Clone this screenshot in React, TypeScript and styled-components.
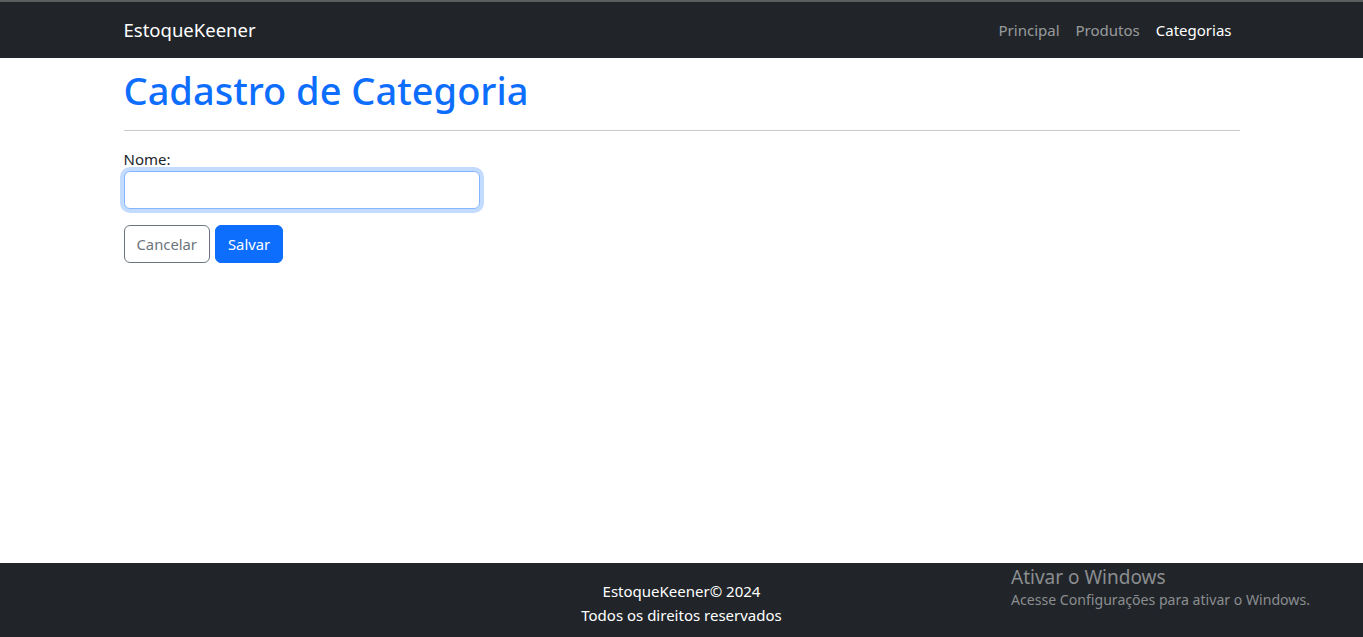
import React from "react";
import styled, { createGlobalStyle } from "styled-components";

const Global = createGlobalStyle`
  * { box-sizing: border-box; }
  html, body { margin: 0; padding: 0; }
  body {
    font-family: "Noto Sans", "Liberation Sans", sans-serif;
    font-size: 16px;
    line-height: 1.5;
    color: #212529;
    background: #fff;
  }
`;

const Page = styled.div`
  min-height: 637px;
  display: flex;
  flex-direction: column;
  border-top: 2px solid #5c5d5e;
  position: relative;
`;

const Navbar = styled.nav`
  background: #212529;
  height: 56px;
  display: flex;
  align-items: center;
`;

const Container = styled.div`
  width: 1140px;
  margin: 0 auto;
  padding: 0 12px;
  display: flex;
  align-items: center;
  justify-content: space-between;
`;

const Brand = styled.a`
  color: #fff;
  font-size: 18.5px;
  text-decoration: none;
`;

const NavList = styled.div`
  display: flex;
`;

const NavLink = styled.a<{ $active?: boolean }>`
  color: ${(p) => (p.$active ? "#fff" : "rgba(255,255,255,0.55)")};
  padding: 8px;
  font-size: 15px;
  text-decoration: none;
`;

const Main = styled.main`
  flex: 1;
  width: 1140px;
  margin: 0 auto;
  padding: 8px 12px 0;
`;

const Title = styled.h1`
  margin: 0 0 8px;
  font-size: 38px;
  font-weight: 500;
  line-height: 48px;
  color: #0d6efd;
`;

const Rule = styled.hr`
  margin: 16px 0;
  border: 0;
  border-top: 1px solid #c8c9ca;
`;

const Label = styled.label`
  display: block;
  line-height: 24px;
  font-size: 15px;
`;

const Input = styled.input`
  display: block;
  width: 356px;
  height: 38px;
  border: 1px solid #86b7fe;
  border-radius: 6px;
  box-shadow: 0 0 0 4px rgba(13, 110, 253, 0.25);
  outline: none;
  padding: 6px 12px;
  font: inherit;
`;

const Actions = styled.div`
  display: flex;
  gap: 5px;
  margin-top: 16px;
`;

const Button = styled.button<{ $variant: "outline" | "primary" }>`
  height: 38px;
  padding: 0 12px;
  border-radius: 6px;
  font-family: inherit;
  font-size: 14.8px;
  border: 1px solid ${(p) => (p.$variant === "primary" ? "#0d6efd" : "#6c757d")};
  background: ${(p) => (p.$variant === "primary" ? "#0d6efd" : "#fff")};
  color: ${(p) => (p.$variant === "primary" ? "#fff" : "#6c757d")};
`;

const Footer = styled.footer`
  background: #212529;
  color: #fff;
  text-align: center;
  padding: 16px 0 10px;
  font-size: 15px;
`;

const FooterLine = styled.div`
  line-height: 24px;
`;

const Watermark = styled.div`
  position: absolute;
  left: 1011px;
  top: 562px;
  color: #8b8d90;
  font-family: "Noto Sans", sans-serif;
`;

const WmTitle = styled.div`
  font-size: 19px;
  line-height: 26px;
`;

const WmText = styled.div`
  font-size: 14.1px;
  line-height: 20px;
`;

export default function App() {
  return (
    <>
      <Global />
      <Page>
        <Navbar>
          <Container>
            <Brand href="#">EstoqueKeener</Brand>
            <NavList>
              <NavLink href="#">Principal</NavLink>
              <NavLink href="#">Produtos</NavLink>
              <NavLink href="#" $active>Categorias</NavLink>
            </NavList>
          </Container>
        </Navbar>
        <Main>
          <Title>Cadastro de Categoria</Title>
          <Rule />
          <Label htmlFor="nome">Nome:</Label>
          <Input id="nome" type="text" />
          <Actions>
            <Button $variant="outline">Cancelar</Button>
            <Button $variant="primary">Salvar</Button>
          </Actions>
        </Main>
        <Footer>
          <FooterLine>EstoqueKeener© 2024</FooterLine>
          <FooterLine>Todos os direitos reservados</FooterLine>
        </Footer>
        <Watermark>
          <WmTitle>Ativar o Windows</WmTitle>
          <WmText>Acesse Configurações para ativar o Windows.</WmText>
        </Watermark>
      </Page>
    </>
  );
}
